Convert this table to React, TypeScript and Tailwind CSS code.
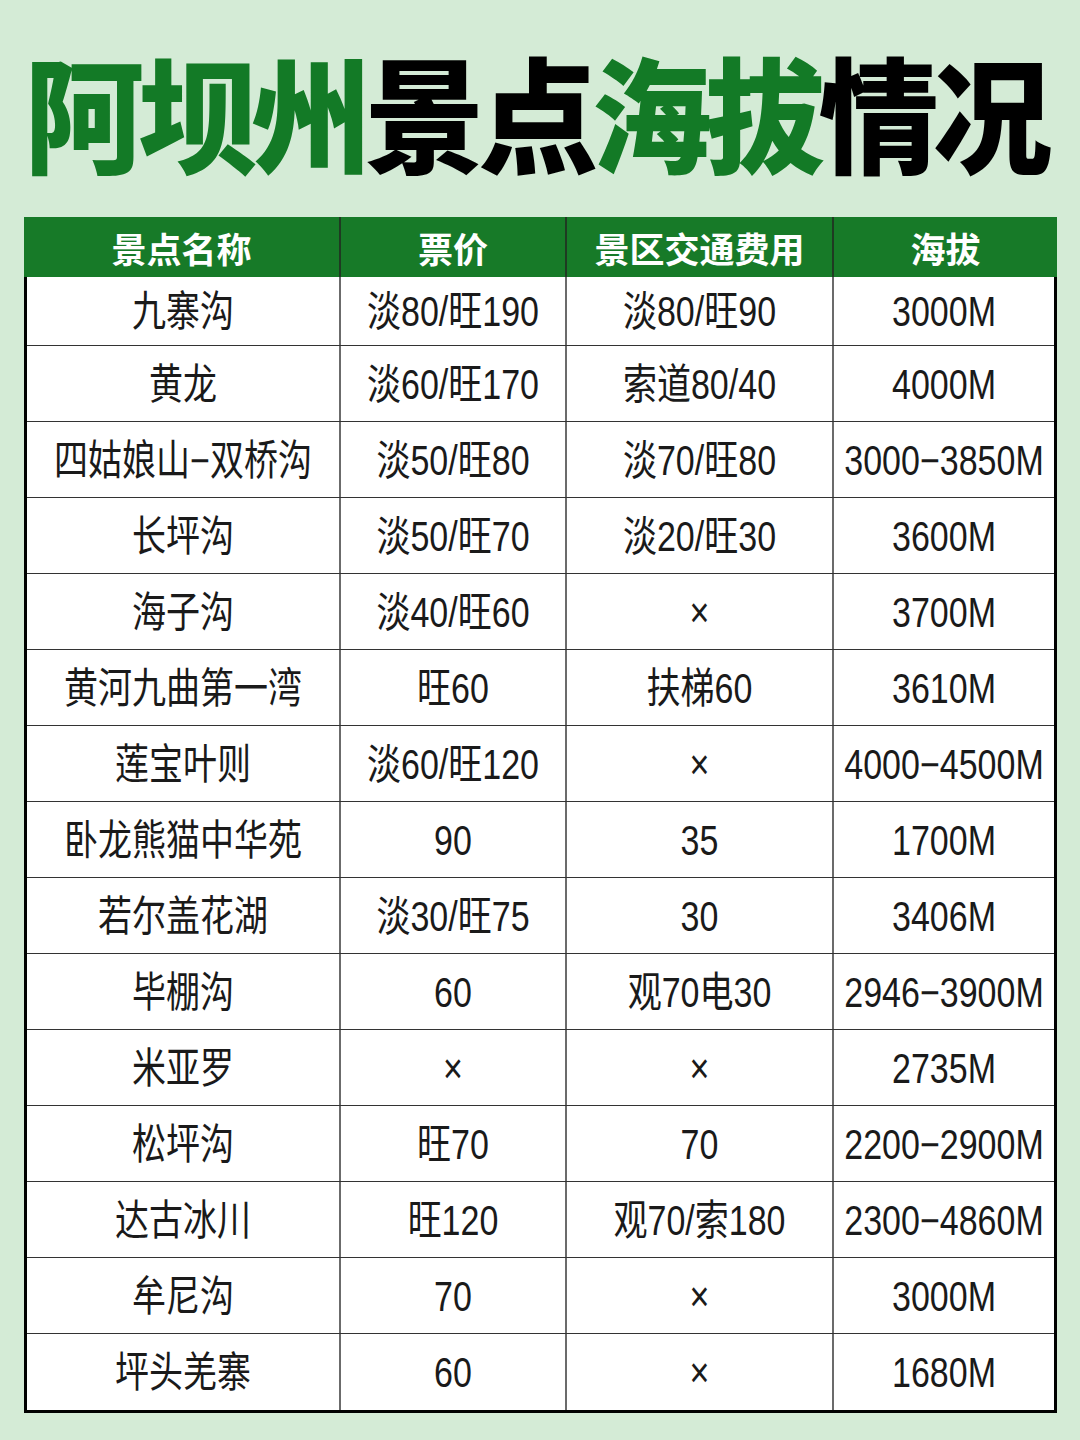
import React from "react";

const rows: [string, string, string, string][] = [
  ["九寨沟", "淡80/旺190", "淡80/旺90", "3000M"],
  ["黄龙", "淡60/旺170", "索道80/40", "4000M"],
  ["四姑娘山−双桥沟", "淡50/旺80", "淡70/旺80", "3000−3850M"],
  ["长坪沟", "淡50/旺70", "淡20/旺30", "3600M"],
  ["海子沟", "淡40/旺60", "×", "3700M"],
  ["黄河九曲第一湾", "旺60", "扶梯60", "3610M"],
  ["莲宝叶则", "淡60/旺120", "×", "4000−4500M"],
  ["卧龙熊猫中华苑", "90", "35", "1700M"],
  ["若尔盖花湖", "淡30/旺75", "30", "3406M"],
  ["毕棚沟", "60", "观70电30", "2946−3900M"],
  ["米亚罗", "×", "×", "2735M"],
  ["松坪沟", "旺70", "70", "2200−2900M"],
  ["达古冰川", "旺120", "观70/索180", "2300−4860M"],
  ["牟尼沟", "70", "×", "3000M"],
  ["坪头羌寨", "60", "×", "1680M"],
];

const titleChars: [string, boolean][] = [
  ["阿", true],
  ["坝", true],
  ["州", true],
  ["景", false],
  ["点", false],
  ["海", true],
  ["拔", true],
  ["情", false],
  ["况", false],
];

const cjk = { fontFamily: '"Noto Sans CJK SC", "Noto Sans", sans-serif' };
const body = {
  fontFamily: '"Liberation Sans", "Noto Sans CJK SC", sans-serif',
};

function Cell({ text, last }: { text: string; last: boolean }) {
  return (
    <div
      className={`flex items-center justify-center overflow-hidden ${
        last ? "" : "border-r-2 border-[#6b6b6b]"
      }`}
    >
      <span
        className="inline-block scale-y-125 text-[34px] font-normal leading-none text-[#1a1a1a] whitespace-nowrap"
        style={body}
      >
        {text}
      </span>
    </div>
  );
}

export default function App() {
  return (
    <div className="w-[1080px] h-[1440px] bg-[#d4ebd6]" style={cjk}>
      <div className="h-[217px] flex justify-center pt-[48px] pr-[10px]">
        <h1 className="flex scale-y-[1.04] origin-top text-[120px] font-black leading-none tracking-[-6.5px]">
          {titleChars.map(([c, g], i) => (
            <span key={i} className={g ? "text-[#137a26]" : "text-black"}>
              {c}
            </span>
          ))}
        </h1>
      </div>
      <div className="ml-[24px] w-[1033px]">
        <div className="grid grid-cols-[317px_226px_267px_223px] h-[60px] bg-[#177a28]">
          {["景点名称", "票价", "景区交通费用", "海拔"].map((h, i) => (
            <div
              key={h}
              className={`flex items-center justify-center ${
                i < 3 ? "border-r-2 border-[#1f3a22]" : ""
              }`}
            >
              <span className="text-[35px] font-bold leading-none text-white">
                {h}
              </span>
            </div>
          ))}
        </div>
        <div className="bg-white border-x-[3px] border-b-[3px] border-black">
          {rows.map((r, ri) => (
            <div
              key={ri}
              className={`grid grid-cols-[314px_226px_267px_220px] ${
                ri === 0 ? "h-[69px]" : "h-[76px]"
              } ${ri < rows.length - 1 ? "border-b-[1.5px] border-[#333]" : ""}`}
            >
              {r.map((t, ci) => (
                <Cell key={ci} text={t} last={ci === 3} />
              ))}
            </div>
          ))}
        </div>
      </div>
    </div>
  );
}
